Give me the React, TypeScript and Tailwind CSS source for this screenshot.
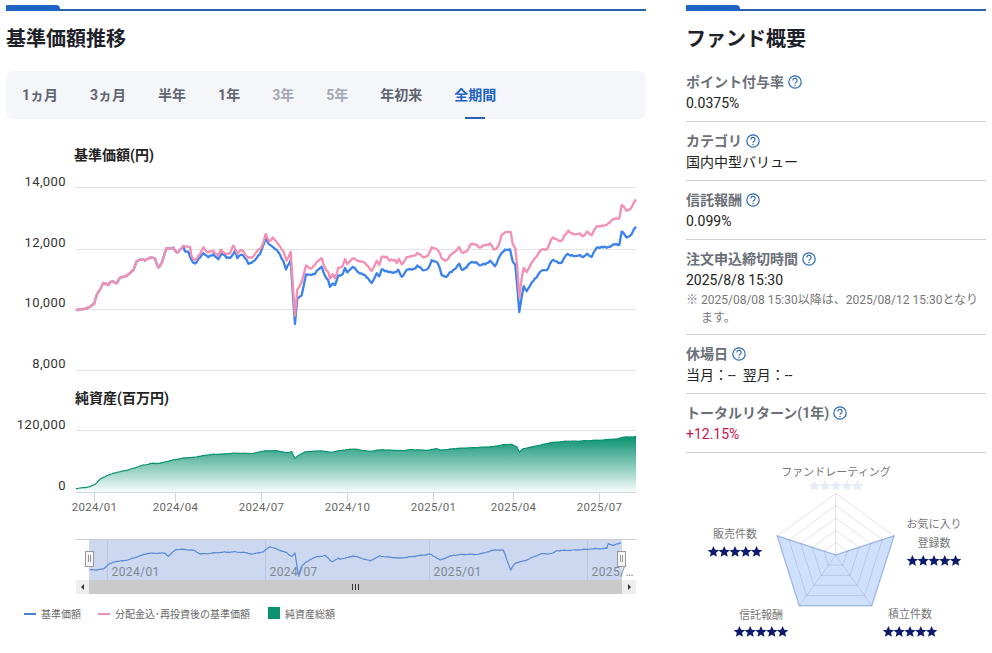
type Pt = [number, number];

// traced from the reference: zoomed crops are 3x, offset by their crop origin
const crop = (pts: number[][], ox: number, oy: number): Pt[] => pts.map(([x, y]) => [ox + x / 3, oy + y / 3]);

const noise = (x: number) => Math.sin(x * 1.7) * 0.35 + Math.sin(x * 4.3) * 0.3 + Math.sin(x * 0.61) * 0.35;

// subdivide so the line gets the small daily wiggle of a price series
const toLine = (pts: Pt[], amp = 1) => {
    const out: string[] = [];
    pts.forEach(([x, y], i) => {
        const next = pts[i + 1];
        out.push(x.toFixed(1) + ',' + (y + noise(x) * amp).toFixed(1));
        if (!next) return;
        const steps = Math.floor((next[0] - x) / 1.5);
        for (let s = 1; s < steps; s++) {
            const t = s / steps;
            const nx = x + (next[0] - x) * t;
            out.push(nx.toFixed(1) + ',' + (y + (next[1] - y) * t + noise(nx) * amp).toFixed(1));
        }
    });
    return out.join(' ');
};

const early = [[228, 508], [240, 511], [255, 504], [270, 502], [282, 490], [290, 462], [300, 450], [310, 430], [325, 433], [335, 424], [350, 430], [360, 413], [385, 405], [400, 390], [410, 362], [430, 360], [445, 355], [465, 355], [475, 382], [485, 372], [500, 322], [520, 326], [530, 338], [550, 320]];

const pink = [
    ...crop([...early, [570, 320], [575, 350], [585, 362], [600, 342], [610, 322], [620, 335], [640, 335], [655, 345], [662, 330], [675, 342], [690, 338], [700, 318], [712, 340], [725, 328], [740, 352], [760, 350], [775, 330], [785, 320], [797, 285], [808, 302], [818, 294], [835, 312], [850, 335], [860, 362], [872, 335], [885, 530], [892, 450], [905, 425], [918, 378], [930, 385], [945, 375], [965, 352], [975, 385], [985, 400]], 0, 140),
    ...crop([[0, 415], [8, 402], [15, 415], [25, 385], [38, 378], [45, 355], [52, 375], [68, 352], [80, 362], [100, 365], [125, 392], [140, 365], [148, 378], [155, 347], [170, 352], [178, 362], [195, 358], [200, 368], [207, 358], [215, 375], [230, 350], [240, 352], [262, 340], [280, 353], [295, 345], [305, 323], [322, 326], [335, 355], [350, 362], [365, 342], [388, 320], [395, 340], [415, 328], [422, 312], [440, 312], [450, 325], [465, 315], [480, 310], [492, 330], [505, 318], [515, 285], [530, 275], [542, 275], [548, 315], [556, 325], [562, 380], [568, 470], [575, 415], [581, 385], [590, 395], [605, 370], [630, 332], [650, 328], [665, 295], [695, 302], [715, 272], [735, 285], [750, 280], [760, 290], [772, 275], [785, 285], [800, 258], [825, 258], [845, 240], [868, 236], [875, 192], [890, 215], [905, 200], [918, 178]], 330, 140),
];

const blue = [
    ...crop([...early, [555, 335], [565, 335], [575, 362], [585, 372], [600, 352], [610, 340], [625, 350], [640, 345], [655, 355], [665, 342], [680, 352], [695, 350], [705, 335], [712, 352], [725, 342], [745, 370], [765, 362], [780, 340], [797, 298], [808, 312], [820, 322], [835, 335], [850, 365], [858, 390], [872, 360], [885, 555], [892, 475], [905, 465], [918, 405], [945, 402], [965, 378], [975, 408], [985, 425]], 0, 140),
    ...crop([[0, 440], [8, 430], [15, 435], [25, 408], [38, 402], [45, 382], [52, 400], [68, 378], [85, 398], [100, 402], [125, 428], [140, 402], [148, 412], [155, 385], [175, 398], [195, 395], [205, 392], [215, 412], [230, 388], [245, 390], [262, 378], [280, 392], [295, 385], [305, 362], [322, 365], [335, 405], [348, 410], [365, 395], [388, 370], [395, 392], [420, 370], [440, 365], [450, 378], [465, 372], [480, 362], [495, 380], [510, 345], [525, 330], [540, 328], [548, 368], [556, 375], [562, 440], [568, 515], [575, 470], [581, 440], [590, 452], [605, 430], [630, 395], [650, 390], [665, 362], [695, 368], [712, 340], [735, 350], [750, 345], [760, 352], [772, 342], [785, 350], [800, 322], [830, 322], [850, 315], [868, 315], [875, 272], [890, 295], [905, 280], [918, 260]], 330, 140),
];

const assets = [
    ...crop([[228, 446], [250, 443], [270, 440], [285, 433], [300, 418], [320, 407], [340, 400], [385, 390], [430, 375], [460, 370], [480, 370], [510, 362], [550, 354], [580, 352], [630, 344], [700, 340], [760, 340], [790, 333], [830, 332], [860, 338], [875, 335], [885, 356], [895, 346], [915, 336], [965, 332], [985, 336]], 0, 340),
    ...crop([[0, 157], [40, 150], [70, 147], [120, 154], [155, 149], [210, 152], [240, 149], [290, 151], [320, 146], [330, 150], [400, 144], [490, 140], [520, 134], [545, 133], [560, 140], [568, 156], [580, 146], [610, 140], [660, 128], [710, 124], [780, 122], [860, 117], [875, 112], [918, 110]], 330, 400),
];

const navLine = [
    ...crop([[270, 120], [310, 118], [325, 103], [345, 95], [385, 90], [440, 70], [495, 70], [505, 78], [528, 58], [580, 60], [600, 72], [680, 66], [720, 66], [760, 72], [790, 65], [810, 50], [860, 68], [875, 80], [885, 70], [895, 135], [905, 108], [935, 85], [975, 76], [995, 95], [1015, 85]], 0, 530),
    ...crop([[0, 88], [40, 78], [90, 92], [120, 78], [180, 85], [270, 72], [300, 90], [340, 75], [420, 72], [465, 60], [490, 60], [512, 120], [525, 100], [560, 90], [600, 72], [640, 70], [650, 62], [740, 58], [800, 55], [805, 40], [820, 47], [843, 38]], 340, 530),
];

const priceAxis = [
    { label: '14,000', grid: 187.5, y: 186 },
    { label: '12,000', grid: 249.5, y: 247 },
    { label: '10,000', grid: 309.5, y: 307 },
    { label: '8,000', grid: 370.5, y: 368 },
];

const dates = [
    { x: 94.5, label: '2024/01' },
    { x: 175.5, label: '2024/04' },
    { x: 261.5, label: '2024/07' },
    { x: 347.5, label: '2024/10' },
    { x: 433.5, label: '2025/01' },
    { x: 513.5, label: '2025/04' },
    { x: 599.5, label: '2025/07' },
];

const navDates = [
    { x: 107.5, label: '2024/01' },
    { x: 265.5, label: '2024/07' },
    { x: 429.5, label: '2025/01' },
    { x: 587.5, label: '2025/…' },
];

function PriceChart() {
    const areaLine = toLine(assets, 0.3);
    return (
        <svg viewBox="6 119 640 481" className="block w-[640px] h-[481px]">
            <defs>
                <linearGradient id="assetFill" x1="0" y1="0" x2="0" y2="1">
                    <stop offset="0" stopColor="#0a9270" />
                    <stop offset="1" stopColor="#0a9270" stopOpacity="0.03" />
                </linearGradient>
            </defs>

            <text x="74" y="160" fontSize="14" fontWeight="700" fill="#222">基準価額(円)</text>
            {priceAxis.map((a) => (
                <g key={a.label}>
                    <line x1="76" x2="636" y1={a.grid} y2={a.grid} stroke="#e3e3e6" />
                    <text x="66" y={a.y} textAnchor="end" fontSize="13" letterSpacing="0.4" fill="#333">{a.label}</text>
                </g>
            ))}
            <polyline points={toLine(blue, 1.3)} fill="none" stroke="#3b82ee" strokeWidth="2.3" strokeLinejoin="round" />
            <polyline points={toLine(pink, 1.3)} fill="none" stroke="#f48fb1" strokeWidth="2.3" strokeLinejoin="round" />

            <text x="75" y="403" fontSize="14" fontWeight="700" fill="#222">純資産(百万円)</text>
            <line x1="76" x2="636" y1="430.5" y2="430.5" stroke="#e3e3e6" />
            <text x="66" y="429" textAnchor="end" fontSize="13" letterSpacing="0.4" fill="#333">120,000</text>
            <text x="66" y="490" textAnchor="end" fontSize="13" letterSpacing="0.4" fill="#333">0</text>
            <polygon points={'76,492 ' + areaLine + ' 636,492'} fill="url(#assetFill)" />
            <polyline points={areaLine} fill="none" stroke="#0a9270" strokeWidth="1.2" />
            <line x1="76" x2="636" y1="492.5" y2="492.5" stroke="#ccd6eb" />
            {dates.map((d) => (
                <g key={d.label}>
                    <line x1={d.x} x2={d.x} y1="492" y2="502" stroke="#ccd6eb" />
                    <text x={d.x} y="511" textAnchor="middle" fontSize="11.5" letterSpacing="0.3" fill="#666">{d.label}</text>
                </g>
            ))}

            {/* range selector */}
            <line x1="76" x2="636" y1="539.5" y2="539.5" stroke="#ccc" />
            <rect x="89" y="540" width="533" height="40" fill="#cbd8ef" />
            {navDates.map((d) => (
                <g key={d.x}>
                    <line x1={d.x} x2={d.x} y1="540" y2="580" stroke="#b9c6de" />
                    <text x={d.x + 4} y="576" fontSize="12" letterSpacing="0.4" fill="#808691">{d.label}</text>
                </g>
            ))}
            <polyline points={toLine(navLine, 0.6)} fill="none" stroke="#5a8ad8" strokeWidth="1.2" strokeLinejoin="round" />
            <rect x="85.5" y="551.5" width="8" height="15" fill="#f4f4f4" stroke="#999" />
            <path d="M88.5 555v7M90.5 555v7" stroke="#999" />
            <rect x="617.5" y="551.5" width="8" height="15" fill="#f4f4f4" stroke="#999" />
            <path d="M620.5 555v7M622.5 555v7" stroke="#999" />

            <rect x="76" y="580" width="560" height="14" fill="#cacaca" />
            <rect x="76" y="580" width="13" height="14" fill="#eee" />
            <rect x="622" y="580" width="14" height="14" fill="#eee" />
            <path d="M81 587l3-3v6zM631 587l-3-3v6z" fill="#333" />
            <path d="M352.5 584v6M355.5 584v6M358.5 584v6" stroke="#333" />
        </svg>
    );
}

function Stars({ cx, cy, fill = '#0b1a6b' }: { cx: number; cy: number; fill?: string }) {
    return (
        <g fill={fill}>
            {[-2, -1, 0, 1, 2].map((n) => {
                const x = cx + n * 10.8;
                const pts = Array.from({ length: 10 }, (_, i) => {
                    const r = i % 2 ? 2.7 : 6;
                    const a = (-90 + i * 36) * (Math.PI / 180);
                    return (x + r * Math.cos(a)).toFixed(2) + ',' + (cy + r * Math.sin(a)).toFixed(2);
                });
                return <polygon key={n} points={pts.join(' ')} />;
            })}
        </g>
    );
}

const radarC: Pt = [835.7, 555];
const radarV: Pt[] = [[835.7, 493.3], [894, 536], [871.7, 605.7], [799.3, 605.7], [777.3, 536]];
const ring = (k: number) => radarV.map(([x, y]) => (radarC[0] + (x - radarC[0]) * k).toFixed(1) + ',' + (radarC[1] + (y - radarC[1]) * k).toFixed(1)).join(' ');

function Radar() {
    const labels = [
        { x: 836, y: 476, t: 'ファンドレーティング' },
        { x: 934, y: 528, t: 'お気に入り' },
        { x: 934, y: 547, t: '登録数' },
        { x: 735, y: 538, t: '販売件数' },
        { x: 761, y: 619, t: '信託報酬' },
        { x: 910, y: 618, t: '積立件数' },
    ];
    return (
        <svg viewBox="686 453 300 192" className="block w-[300px] h-[192px]">
            <polygon points={radarC.join(',') + ' 894,536 871.7,605.7 799.3,605.7 777.3,536'} fill="#cfe0fc" stroke="#b3cdf6" strokeWidth="1.5" />
            {[0.2, 0.4, 0.6, 0.8, 1].map((k) => (
                <polygon key={k} points={ring(k)} fill="none" stroke="#000028" strokeOpacity="0.11" />
            ))}
            {radarV.map(([x, y]) => (
                <line key={x} x1={radarC[0]} y1={radarC[1]} x2={x} y2={y} stroke="#000028" strokeOpacity="0.11" />
            ))}
            {labels.map((l) => (
                <text key={l.t} x={l.x} y={l.y} textAnchor="middle" fontSize="11" fill="#777">{l.t}</text>
            ))}
            <Stars cx={836} cy={486} fill="#e6ecf5" />
            <Stars cx={934} cy={561} />
            <Stars cx={735} cy={552} />
            <Stars cx={761} cy={632} />
            <Stars cx={910} cy={632} />
        </svg>
    );
}

function HelpIcon() {
    return (
        <svg viewBox="0 0 14 14" className="w-[14px] h-[14px]" fill="none" stroke="#2a66b8">
            <circle cx="7" cy="7" r="6.2" strokeWidth="1.2" />
            <path d="M4.9 5.4a2.1 2.1 0 1 1 3.2 1.8c-.7.4-1.1.8-1.1 1.6" strokeWidth="1.2" />
            <path d="M7 10v1" strokeWidth="1.3" />
        </svg>
    );
}

function SectionHead({ title }: { title: string }) {
    return (
        <>
            <div className="h-[6px] border-b-2 border-[#2a62ad]">
                <div className="h-[6px] w-[54px] rounded-tr-[4px] rounded-tl-[1px] bg-[#1f63c4]" />
            </div>
            <h2 className="mt-[14px] text-[20px] leading-[28px] font-bold text-[#1d2129]">{title}</h2>
        </>
    );
}

function Info({ label, value, valueClass = 'text-[#222]', note }: { label: string; value: string; valueClass?: string; note?: string }) {
    return (
        <div className="pt-[8px] pb-[7px] border-b border-[#cfd1d6]">
            <div className="flex items-center gap-[4px] h-[22px] text-sm font-bold text-[#6a6f78]">
                {label}
                <HelpIcon />
            </div>
            <div className={'h-[21px] text-sm leading-[21px] ' + valueClass}>{value}</div>
            {note && <p className="pl-[15px] -indent-[15px] text-xs leading-[18px] text-[#777]">{note}</p>}
        </div>
    );
}

const tabs = [
    { label: '1ヵ月', cls: 'text-[#5f6570]' },
    { label: '3ヵ月', cls: 'text-[#5f6570]' },
    { label: '半年', cls: 'text-[#5f6570]' },
    { label: '1年', cls: 'text-[#5f6570]' },
    { label: '3年', cls: 'text-[#a3a9b3]' },
    { label: '5年', cls: 'text-[#a3a9b3]' },
    { label: '年初来', cls: 'text-[#5f6570]' },
    { label: '全期間', cls: 'text-[#1f63c4]', active: true },
];

export default function App() {
    return (
        <div className="flex gap-10 pl-[6px] pt-[5px] h-[653px] overflow-hidden bg-white font-['Roboto','Noto_Sans_CJK_JP',sans-serif]">
            <div className="w-[640px]">
                <SectionHead title="基準価額推移" />
                <div className="mt-[18px] flex gap-8 h-12 px-4 rounded-lg bg-[#f5f6fa]">
                    {tabs.map((t) => (
                        <div key={t.label} className={'relative flex items-center text-sm font-bold ' + t.cls}>
                            {t.label}
                            {t.active && <span className="absolute bottom-0 left-1/2 -translate-x-1/2 w-5 h-[2px] bg-[#2a62ad]" />}
                        </div>
                    ))}
                </div>
                <PriceChart />
                <div className="flex items-center h-7 pl-[18px] text-[10px] text-[#666]">
                    <span className="w-3 h-[2px] bg-[#4a7fcf] mr-[5px]" />
                    <span className="mr-[17px]">基準価額</span>
                    <span className="w-3 h-[2px] bg-[#e88fb2] mr-[5px]" />
                    <span className="mr-[18px]">分配金込･再投資後の基準価額</span>
                    <span className="w-3 h-3 bg-[#0a9270] mr-[5px] -mt-[2px]" />
                    <span>純資産総額</span>
                </div>
            </div>
            <div className="w-[300px]">
                <SectionHead title="ファンド概要" />
                <div className="mt-[10px]">
                    <Info label="ポイント付与率" value="0.0375%" />
                    <Info label="カテゴリ" value="国内中型バリュー" />
                    <Info label="信託報酬" value="0.099%" />
                    <Info label="注文申込締切時間" value="2025/8/8 15:30" note="※ 2025/08/08 15:30以降は、2025/08/12 15:30となります。" />
                    <Info label="休場日" value={'当月：--\u00a0\u00a0翌月：--'} />
                    <Info label="トータルリターン(1年)" value="+12.15%" valueClass="text-[#c8104e]" />
                </div>
                <Radar />
            </div>
        </div>
    );
}
